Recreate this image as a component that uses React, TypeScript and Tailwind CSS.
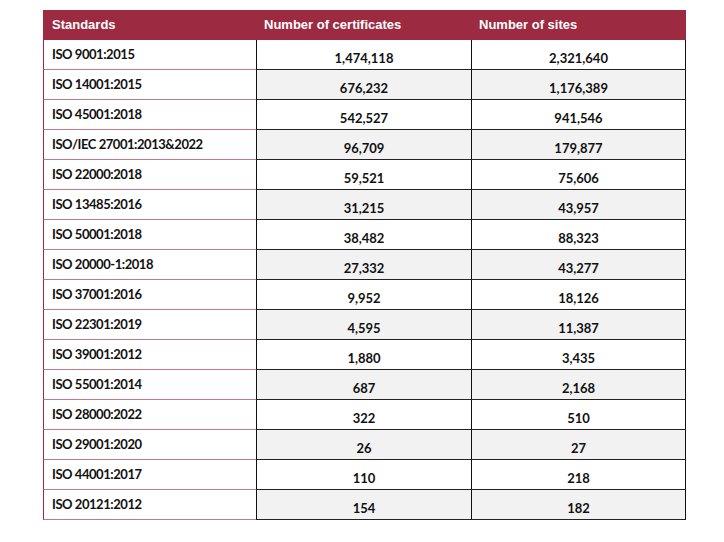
import React from 'react';

const rows: [string, string, string][] = [
  ['ISO 9001:2015', '1,474,118', '2,321,640'],
  ['ISO 14001:2015', '676,232', '1,176,389'],
  ['ISO 45001:2018', '542,527', '941,546'],
  ['ISO/IEC 27001:2013&2022', '96,709', '179,877'],
  ['ISO 22000:2018', '59,521', '75,606'],
  ['ISO 13485:2016', '31,215', '43,957'],
  ['ISO 50001:2018', '38,482', '88,323'],
  ['ISO 20000-1:2018', '27,332', '43,277'],
  ['ISO 37001:2016', '9,952', '18,126'],
  ['ISO 22301:2019', '4,595', '11,387'],
  ['ISO 39001:2012', '1,880', '3,435'],
  ['ISO 55001:2014', '687', '2,168'],
  ['ISO 28000:2022', '322', '510'],
  ['ISO 29001:2020', '26', '27'],
  ['ISO 44001:2017', '110', '218'],
  ['ISO 20121:2012', '154', '182'],
];

const App: React.FC = () => {
  return (
    <div className="w-[724px] h-[542px] bg-white pt-[10px] pl-[43px]">
      <div className="w-[643px]">
        {/* Header */}
        <div className="grid grid-cols-[213px_215px_215px] h-[30px] bg-[#9c2b41] text-white text-[13px] font-bold font-['Liberation_Sans',Arial,sans-serif]">
          <div className="flex items-center pl-[9px]">Standards</div>
          <div className="flex items-center pl-[8px]">Number of certificates</div>
          <div className="flex items-center pl-[8px]">Number of sites</div>
        </div>

        {rows.map(([std, certs, sites], i) => {
          const shade = i % 2 === 1 ? 'bg-[#f2f2f2]' : 'bg-white';
          return (
            <div
              key={std}
              className="grid grid-cols-[213px_215px_215px] h-[30px] text-[13px] font-bold text-[#111] font-['Lato','Open_Sans',sans-serif]"
            >
              <div className="flex items-center pl-[8px] tracking-[-0.45px] bg-white border-l border-l-[#9c2b41] border-b border-b-[#c07a8c]">
                {std}
              </div>
              <div className={`flex items-center justify-center pt-[9px] border-l border-l-[#111] border-b border-b-[#222] ${shade}`}>
                {certs}
              </div>
              <div className={`flex items-center justify-center pt-[9px] border-l border-r border-l-[#111] border-r-[#111] border-b border-b-[#222] ${shade}`}>
                {sites}
              </div>
            </div>
          );
        })}
      </div>
    </div>
  );
};

export default App;
